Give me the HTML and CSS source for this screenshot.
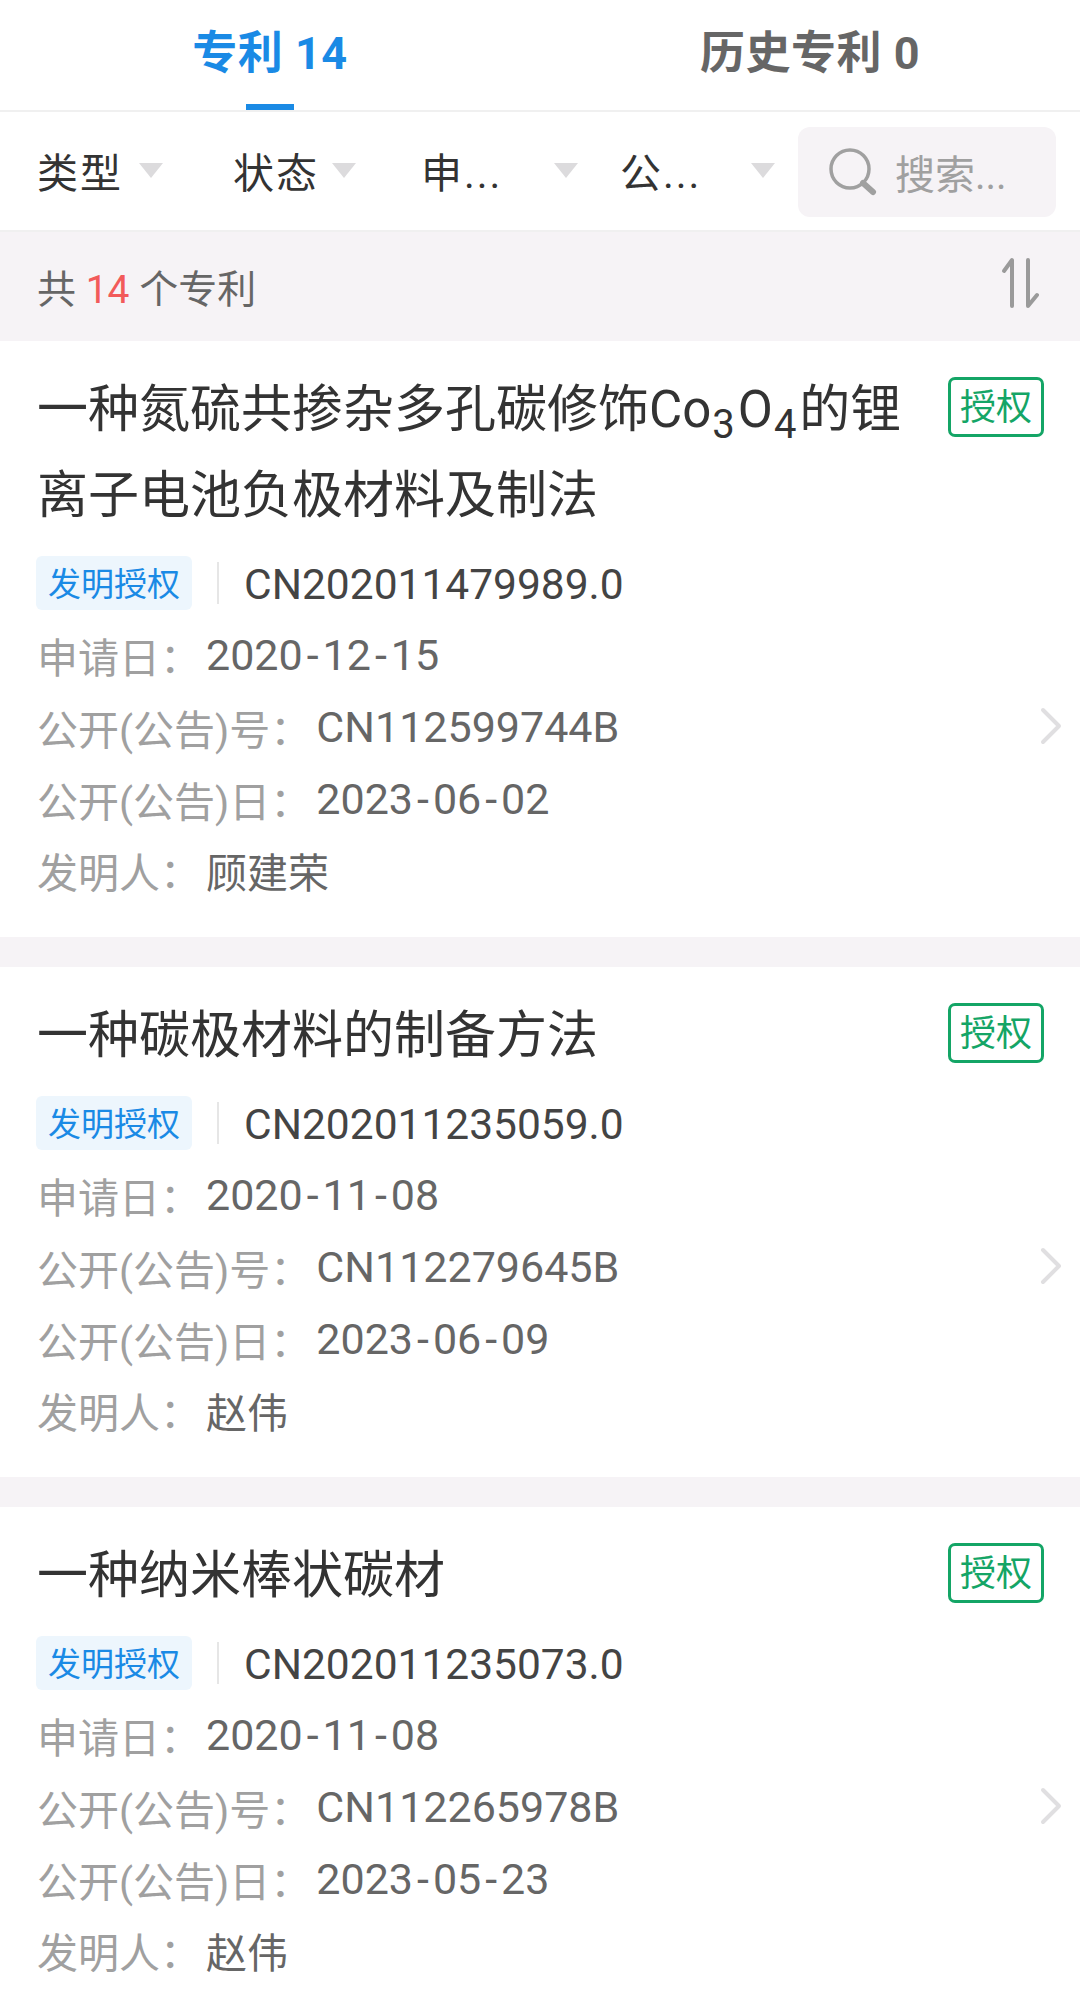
FILE: index.html
```html
<!DOCTYPE html>
<html lang="zh-CN">
<head>
  <meta charset="UTF-8">
  <title>专利</title>
  <link rel="stylesheet" href="styles.css">
</head>
<body>

  <!-- Tabs -->
  <div class="tabs">
    <div class="tab tab-on">专利 14</div>
    <div class="tab">历史专利 0</div>
  </div>

  <!-- Filters -->
  <div class="filters">
    <div class="filter f1"><span>类型</span><i class="tri"></i></div>
    <div class="filter f2"><span>状态</span><i class="tri"></i></div>
    <div class="filter f3"><span>申...</span><i class="tri"></i></div>
    <div class="filter f4"><span>公...</span><i class="tri"></i></div>
    <div class="search">
      <svg class="search-icon" width="50" height="50" viewBox="0 0 50 50">
        <circle cx="22" cy="22" r="19" fill="none" stroke="#a0a0a0" stroke-width="3.5"/>
        <path d="M35 36 L45 45" stroke="#a0a0a0" stroke-width="6" stroke-linecap="round"/>
      </svg>
      <span>搜索...</span>
    </div>
  </div>

  <!-- Count -->
  <div class="count">
    <div>共 <em>14</em> 个专利</div>
    <svg class="sort" width="38" height="52" viewBox="0 0 38 52">
      <path d="M3 14 L11 3 V49" fill="none" stroke="#9a9a9a" stroke-width="4" stroke-linecap="round" stroke-linejoin="round"/>
      <path d="M27 3 V49 L36 38" fill="none" stroke="#9a9a9a" stroke-width="4" stroke-linecap="round" stroke-linejoin="round"/>
    </svg>
  </div>

  <!-- Patent 1 -->
  <div class="card">
    <div class="card-top">
      <div class="title">一种氮硫共掺杂多孔碳修饰Co<sub>3</sub>O<sub>4</sub>的锂<br>离子电池负极材料及制法</div>
      <div class="badge">授权</div>
    </div>
    <div class="code-row">
      <span class="chip">发明授权</span>
      <i class="divider"></i>
      <span class="code">CN202011479989.0</span>
    </div>
    <div class="row"><span class="label">申请日：</span><span class="val">2020<b>-</b>12<b>-</b>15</span></div>
    <div class="row"><span class="label">公开(公告)号：</span><span class="val">CN112599744B</span><svg class="chev" width="22" height="38" viewBox="0 0 22 38"><path d="M3 3 L19 19 L3 35" fill="none" stroke="#e0dfe1" stroke-width="4" stroke-linecap="round" stroke-linejoin="round"/></svg></div>
    <div class="row"><span class="label">公开(公告)日：</span><span class="val">2023<b>-</b>06<b>-</b>02</span></div>
    <div class="row"><span class="label">发明人：</span><span class="val name">顾建荣</span></div>
  </div>

  <!-- Patent 2 -->
  <div class="card">
    <div class="card-top">
      <div class="title">一种碳极材料的制备方法</div>
      <div class="badge">授权</div>
    </div>
    <div class="code-row">
      <span class="chip">发明授权</span>
      <i class="divider"></i>
      <span class="code">CN202011235059.0</span>
    </div>
    <div class="row"><span class="label">申请日：</span><span class="val">2020<b>-</b>11<b>-</b>08</span></div>
    <div class="row"><span class="label">公开(公告)号：</span><span class="val">CN112279645B</span><svg class="chev" width="22" height="38" viewBox="0 0 22 38"><path d="M3 3 L19 19 L3 35" fill="none" stroke="#e0dfe1" stroke-width="4" stroke-linecap="round" stroke-linejoin="round"/></svg></div>
    <div class="row"><span class="label">公开(公告)日：</span><span class="val">2023<b>-</b>06<b>-</b>09</span></div>
    <div class="row"><span class="label">发明人：</span><span class="val name">赵伟</span></div>
  </div>

  <!-- Patent 3 -->
  <div class="card">
    <div class="card-top">
      <div class="title">一种纳米棒状碳材</div>
      <div class="badge">授权</div>
    </div>
    <div class="code-row">
      <span class="chip">发明授权</span>
      <i class="divider"></i>
      <span class="code">CN202011235073.0</span>
    </div>
    <div class="row"><span class="label">申请日：</span><span class="val">2020<b>-</b>11<b>-</b>08</span></div>
    <div class="row"><span class="label">公开(公告)号：</span><span class="val">CN112265978B</span><svg class="chev" width="22" height="38" viewBox="0 0 22 38"><path d="M3 3 L19 19 L3 35" fill="none" stroke="#e0dfe1" stroke-width="4" stroke-linecap="round" stroke-linejoin="round"/></svg></div>
    <div class="row"><span class="label">公开(公告)日：</span><span class="val">2023<b>-</b>05<b>-</b>23</span></div>
    <div class="row"><span class="label">发明人：</span><span class="val name">赵伟</span></div>
  </div>

</body>
</html>
```

FILE: styles.css
```css
/* page */
html, body {
  margin: 0;
  padding: 0;
  height: 2009px;
  overflow: hidden;
}

body {
  background: #f6f3f6;
  font-family: Roboto, "Noto Sans CJK SC", sans-serif;
  color: #333;
}

/* tabs */
.tabs {
  display: flex;
  height: 110px;
  background: #fff;
  border-bottom: 2px solid #f0f0f0;
}

.tab {
  flex: 1;
  text-align: center;
  font-size: 45px;
  font-weight: 700;
  line-height: 108px;
  letter-spacing: 0.5px;
  color: #666;
  position: relative;
}

.tab-on {
  color: #1a8ae5;
}

.tab-on::after {
  content: "";
  position: absolute;
  left: 246px;
  bottom: 0;
  width: 48px;
  height: 6px;
  background: #1a8ae5;
}

/* filters */
.filters {
  display: flex;
  align-items: center;
  height: 118px;
  padding: 0 24px 0 37px;
  background: #fff;
  border-bottom: 2px solid #f0f0f0;
}

.filter {
  display: flex;
  align-items: center;
  margin-bottom: 2px;
  font-size: 41px;
  color: #333;
}

.f1 { width: 196px; }
.f2 { width: 188px; }
.f3 { width: 199px; }
.f4 { width: 178px; }

.filter span {
  width: 100px;
  flex-shrink: 0;
  letter-spacing: 2px;
}

.f1 .tri { margin-left: 2px; }
.f2 .tri { margin-left: -1px; }
.f3 .tri { margin-left: 33px; }
.f4 .tri { margin-left: 31px; }

.tri {
  width: 0;
  height: 0;
  border-left: 12px solid transparent;
  border-right: 12px solid transparent;
  border-top: 15px solid #dcdbdd;
}

.search {
  display: flex;
  align-items: center;
  width: 258px;
  height: 90px;
  box-sizing: border-box;
  margin-top: 2px;
  padding-left: 30px;
  background: #f6f3f6;
  border-radius: 12px;
  font-size: 40px;
  color: #a0a0a0;
}

.search-icon {
  margin-right: 17px;
}

/* count */
.count {
  display: flex;
  justify-content: space-between;
  align-items: center;
  height: 107px;
  padding: 0 41px 2px 37px;
  background: #f6f3f6;
  font-size: 39px;
  color: #666;
}

.count em {
  font-style: normal;
  color: #f25a5a;
}

.sort {
  margin-bottom: 6px;
}

/* cards */
.card {
  padding: 26px 28px 29px 37px;
  margin-bottom: 30px;
  background: #fff;
}

.card:last-child {
  margin-bottom: 0;
}

.card-top {
  display: flex;
  justify-content: space-between;
  align-items: flex-start;
}

.title {
  width: 880px;
  font-size: 51px;
  line-height: 86px;
  color: #333;
}

.title sub {
  margin: 0 3px 0 1px;
  font-size: 40px;
  line-height: 0;
}

.badge {
  width: 96px;
  height: 60px;
  box-sizing: border-box;
  margin-top: 10px;
  margin-right: 8px;
  border: 3px solid #14a566;
  border-radius: 7px;
  text-align: center;
  font-size: 36px;
  line-height: 56px;
  color: #14a566;
}

.code-row {
  display: flex;
  align-items: center;
  height: 54px;
  margin: 17px 0 9px -1px;
}

.chip {
  padding: 0 12px;
  height: 54px;
  line-height: 58px;
  background: #edf6fd;
  border-radius: 6px;
  font-size: 33px;
  color: #1a8ae5;
}

.divider {
  width: 2px;
  height: 42px;
  margin: 0 25px;
  background: #e6e6e6;
}

.code {
  padding-top: 2px;
  font-size: 42.5px;
  color: #444;
}

.row {
  display: flex;
  align-items: center;
  height: 72px;
  font-size: 41px;
}

.row:last-child {
  height: 70px;
  padding-bottom: 3px;
}

.label {
  color: #a0a0a0;
  margin-right: 5px;
}

.val {
  font-size: 43px;
  color: #666;
}

.val b {
  padding: 0 4px;
  font-weight: 400;
}

.name {
  font-size: 41px;
}

.chev {
  margin-left: auto;
  margin-right: -10px;
  margin-top: -2px;
}
```
